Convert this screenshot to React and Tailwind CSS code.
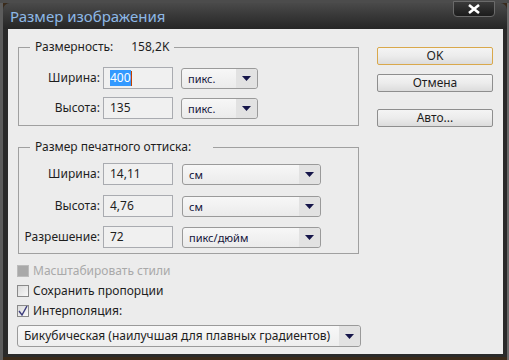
import React from 'react';

const font = { fontFamily: '"Noto Sans", "DejaVu Sans", sans-serif' };

const Arrow = () => (
  <svg width="9" height="5" viewBox="0 0 9 5"><path d="M0 0h9L4.5 5z" fill="#16164a" /></svg>
);

const Dropdown = ({ value, width }) => (
  <div className={`flex items-center h-[21px] rounded-[3px] border border-[#9a9a9a] bg-gradient-to-b from-[#f7f7f7] to-[#ebebeb] ${width}`}>
    <span className="flex-1 pl-[6px] text-[11px] text-[#14143a] leading-none">{value}</span>
    <span className="w-[21px] h-full flex items-center justify-center bg-[#e2e2e2] rounded-r-[3px]"><Arrow /></span>
  </div>
);

const Field = ({ label, value, selected }) => (
  <div className="flex items-center">
    <span className="w-[84px] text-right pr-[3px] text-[12px] text-[#1e1e1e] whitespace-nowrap">{label}</span>
    <div className="w-[70px] h-[22px] border border-[#a9abb0] bg-[#f0f0f0] flex items-center pl-[6px] text-[12px] text-[#1e1e1e]">
      {selected ? (
        <>
          <span className="bg-[#3399ff] text-white leading-[16px]">{value}</span>
          <span className="w-px h-[15px] bg-[#c04000]" />
        </>
      ) : value}
    </div>
  </div>
);

const Check = ({ label, checked, disabled }) => (
  <div className="flex items-center h-[20px]">
    <span
      className={`w-[12px] h-[12px] border flex items-center justify-center ${
        disabled ? 'border-[#bcbcbc] bg-[#a9a9a9]' : 'border-[#8a8a8a] bg-gradient-to-br from-[#dcdcdc] to-[#f8f8f8]'
      }`}
    >
      {checked && (
        <svg width="10" height="10" viewBox="0 0 10 10"><path d="M1 5l3 4L9 0" stroke="#3c3c7c" strokeWidth="1.4" fill="none" /></svg>
      )}
    </span>
    <span className={`ml-[4px] text-[12px] ${disabled ? 'text-[#a9a9a9]' : 'text-[#1e1e1e]'}`}>{label}</span>
  </div>
);

const Btn = ({ children, focus, mt }) => (
  <button
    className={`block w-[116px] h-[18px] rounded-[2px] border text-[12px] leading-none text-[#1e1e1e] bg-gradient-to-b from-[#f4f4f4] via-[#ececec] to-[#dcdcdc] ${mt} ${
      focus ? 'border-[#d9a84b]' : 'border-[#8e8e8e]'
    }`}
  >
    {children}
  </button>
);

export default function App() {
  return (
    <div className="w-[509px] h-[360px] bg-[#3a2a1a] overflow-hidden" style={font}>
      <div className="h-[3px] bg-[#4c4c4c]" />
      <div className="flex">
        <div className="w-[3px] h-[357px] bg-[#5c5c5c]" />
        <div className="relative w-[504px] h-[354px] rounded-t-[7px] bg-[#2a2a2a] flex flex-col">
          <div className="h-[26px] rounded-t-[7px] bg-gradient-to-b from-[#4a4a4a] to-[#262626] flex items-center pl-[7px]">
            <span className="text-[15px] text-[#8db8e6] leading-none">Размер изображения</span>
          </div>
          <div className="absolute top-[-2px] right-[12px] w-[42px] h-[16px] rounded-b-[4px] border border-[#6a6a6a] bg-gradient-to-b from-[#3a3a3a] to-[#1c1c1c] flex items-center justify-center">
            <svg width="12" height="10" viewBox="0 0 12 10"><path d="M1 1l10 8M11 1L1 9" stroke="#fff" strokeWidth="2.6" /></svg>
          </div>
          <div className="ml-[5px] mr-[4px] h-[325px] bg-[#ececec] flex px-[10px] pt-[10px]">
            <div className="w-[343px] flex flex-col">
              <fieldset className="w-[341px] h-[87px] border border-[#a0a0a0]">
                <legend className="ml-[11px] px-[5px] text-[12px] leading-[16px] text-[#1e1e1e]">
                  Размерность:<span className="ml-[18px]">158,2K</span>
                </legend>
                <div className="flex flex-col gap-[8px] pt-[12px]">
                  <div className="flex items-center gap-[8px]"><Field label="Ширина:" value="400" selected /><Dropdown value="пикс." width="w-[77px]" /></div>
                  <div className="flex items-center gap-[8px]"><Field label="Высота:" value="135" /><Dropdown value="пикс." width="w-[77px]" /></div>
                </div>
              </fieldset>
              <fieldset className="mt-[13px] w-[341px] h-[115px] border border-[#a0a0a0]">
                <legend className="ml-[11px] pl-[5px] pr-[22px] text-[12px] leading-[16px] text-[#1e1e1e]">
                  Размер печатного оттиска:
                </legend>
                <div className="flex flex-col pt-[8px]">
                  <div className="flex items-center gap-[9px]"><Field label="Ширина:" value="14,11" /><Dropdown value="см" width="w-[139px]" /></div>
                  <div className="mt-[10px] flex items-center gap-[9px]"><Field label="Высота:" value="4,76" /><Dropdown value="см" width="w-[139px]" /></div>
                  <div className="mt-[9px] flex items-center gap-[9px]"><Field label="Разрешение:" value="72" /><Dropdown value="пикс/дюйм" width="w-[139px]" /></div>
                </div>
              </fieldset>
              <div className="mt-[7px] -ml-[1px] flex flex-col">
                <Check label="Масштабировать стили" disabled />
                <Check label="Сохранить пропорции" />
                <Check label="Интерполяция:" checked />
              </div>
              <div className="mt-[4px] -ml-[1px] w-[344px] h-[22px] flex items-center rounded-[3px] border border-[#9a9a9a] bg-gradient-to-b from-[#f8f8f8] to-[#eeeeee]">
                <span className="flex-1 pl-[6px] text-[12px] text-[#1e1e1e] leading-none whitespace-nowrap">Бикубическая (наилучшая для плавных градиентов)</span>
                <span className="w-[21px] h-full flex items-center justify-center bg-[#e2e2e2] rounded-r-[3px]"><Arrow /></span>
              </div>
            </div>
            <div className="ml-[16px] flex flex-col">
              <Btn focus mt="mt-[8px]">OK</Btn>
              <Btn mt="mt-[9px]">Отмена</Btn>
              <Btn mt="mt-[17px]">Авто...</Btn>
            </div>
          </div>
        </div>
        <div className="w-[2px] h-[357px] bg-[#6a6a6a]" />
      </div>
    </div>
  );
}
